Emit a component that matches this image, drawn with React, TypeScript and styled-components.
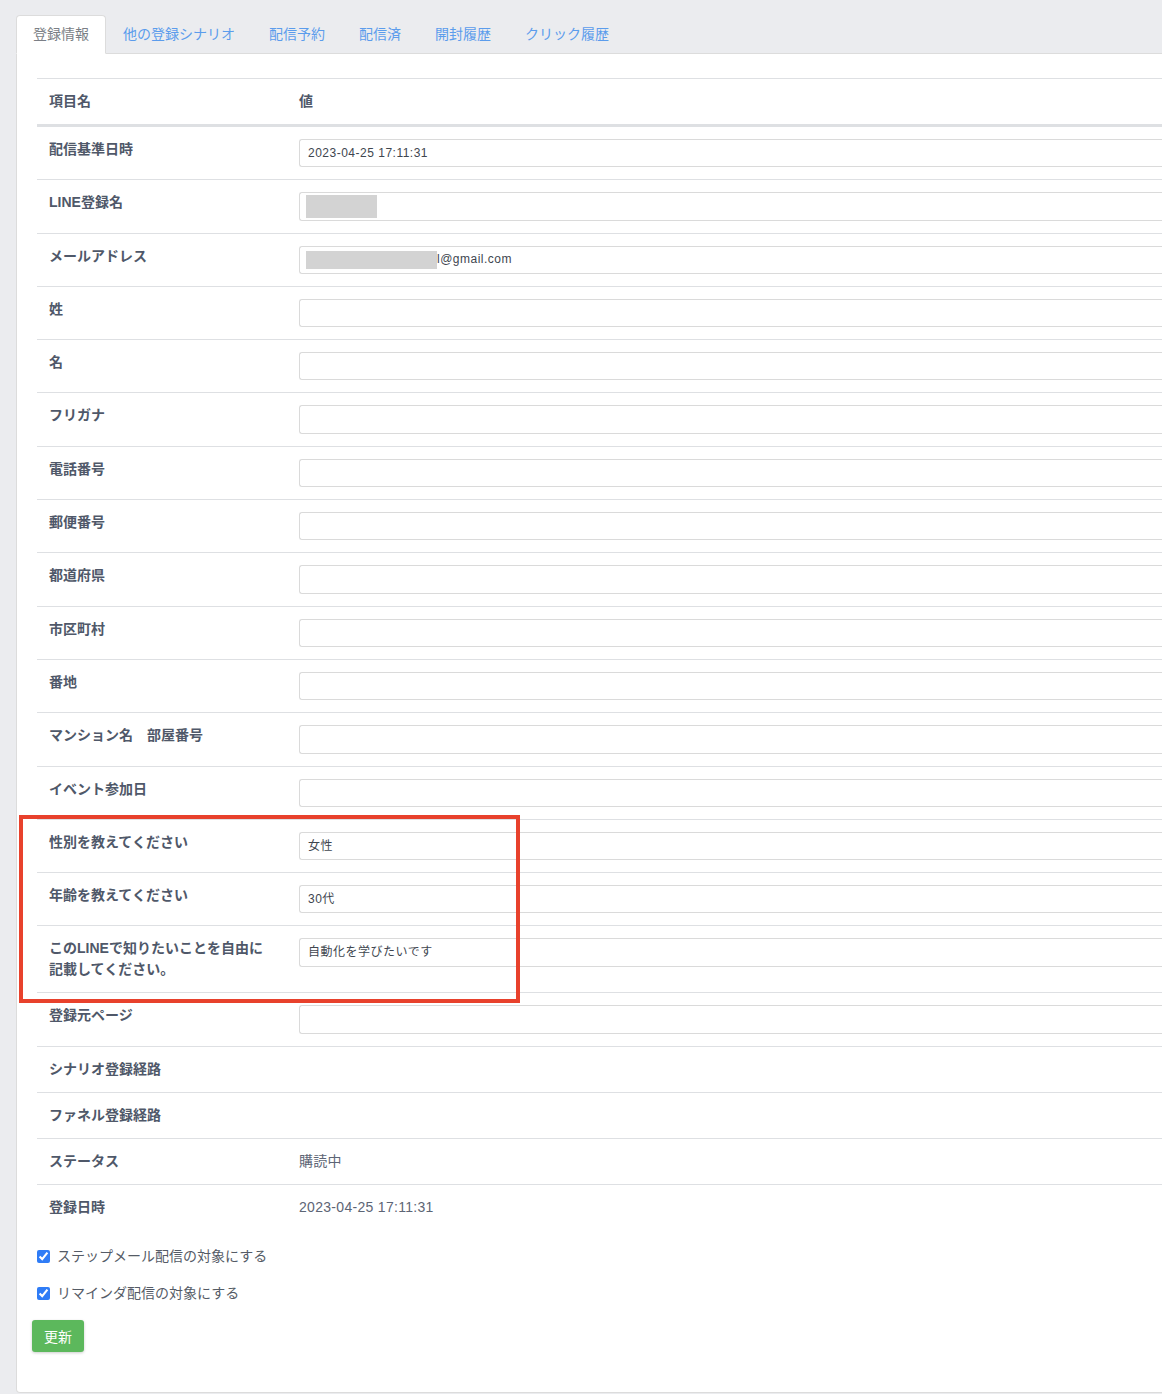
import React from "react";
import styled, { createGlobalStyle } from "styled-components";

const GlobalStyle = createGlobalStyle`
  html, body {
    margin: 0;
    padding: 0;
    overflow: hidden;
    background: #ebecef;
  }
  body {
    font-family: "Liberation Sans", "Noto Sans CJK JP", sans-serif;
    font-size: 14px;
    line-height: 21px;
    color: #4f5869;
  }
  *, *::before, *::after { box-sizing: border-box; }
`;

const Page = styled.div`
  width: 1260px;
  padding: 15px 0 0 16px;
`;

const TabList = styled.nav`
  display: flex;
  border-bottom: 1px solid #dcdcdc;
`;

const Tab = styled.a<{ $active?: boolean }>`
  display: block;
  padding: 8px 16px;
  font-size: 14px;
  line-height: 21px;
  border: 1px solid transparent;
  border-radius: 4px 4px 0 0;
  margin-bottom: -1px;
  text-decoration: none;
  cursor: pointer;
  color: ${(p) => (p.$active ? "#7b7f86" : "#5b9cec")};
  background: ${(p) => (p.$active ? "#ffffff" : "transparent")};
  border-color: ${(p) => (p.$active ? "#dcdcdc #dcdcdc #ffffff" : "transparent")};
`;

const Panel = styled.section`
  background: #ffffff;
  border: 1px solid #dcdcdc;
  border-top: none;
  border-radius: 0 0 4px 4px;
  padding: 24px 20px 40px;
`;

const Table = styled.div`
  display: flex;
  flex-direction: column;
  margin-bottom: 16px;
`;

const HeadRow = styled.div`
  display: grid;
  grid-template-columns: 250px 1fr;
  border-top: 1px solid #dee0e3;
  border-bottom: 2px solid #dee0e3;
`;

const Row = styled.div`
  display: grid;
  grid-template-columns: 250px 1fr;
  border-top: 1px solid #dee0e3;
`;

const LabelCell = styled.div`
  padding: 12px;
  font-weight: 700;
  color: #4f5869;
  font-size: 14px;
  line-height: 21px;
`;

const ValueCell = styled.div`
  padding: 12px;
  color: #5d6575;
  font-size: 14px;
  line-height: 21px;
  letter-spacing: 0.3px;
  min-width: 0;
`;

const Field = styled.div`
  position: relative;
  display: flex;
  align-items: center;
  height: 28.3px;
  padding: 0 8px;
  border: 1px solid #dadada;
  border-right: none;
  border-radius: 3px 0 0 3px;
  background: #fff;
  font-size: 12px;
  letter-spacing: 0.5px;
  color: #40464f;
  white-space: nowrap;
`;

const Redact = styled.span<{ $w: number; $h: number }>`
  display: inline-block;
  width: ${(p) => p.$w}px;
  height: ${(p) => p.$h}px;
  background: #d3d3d3;
  margin-left: -2px;
`;

const Highlight = styled.div`
  position: relative;
  display: flex;
  flex-direction: column;
  &::after {
    content: "";
    position: absolute;
    left: -18px;
    top: -4px;
    width: 501px;
    bottom: -11px;
    border: 4px solid #e8412c;
    pointer-events: none;
  }
`;

const CheckLine = styled.label`
  display: flex;
  align-items: center;
  gap: 7px;
  font-size: 14px;
  line-height: 21px;
  color: #555b66;
  margin-bottom: 16px;
`;

const Check = styled.input`
  width: 13px;
  height: 13px;
  margin: 0;
  accent-color: #2f7cf6;
`;

const UpdateButton = styled.button`
  margin-left: -5px;
  height: 32px;
  padding: 0 12px;
  background: #5cb85c;
  color: #ffffff;
  border: none;
  border-radius: 3px;
  font-family: inherit;
  font-size: 14px;
  box-shadow: 0 1px 3px rgba(0, 0, 0, 0.2);
  cursor: pointer;
`;

type FieldRow = { label: React.ReactNode; value?: React.ReactNode };

const topRows: FieldRow[] = [
  { label: "配信基準日時", value: "2023-04-25 17:11:31" },
  { label: "LINE登録名", value: <Redact $w={71} $h={23} /> },
  {
    label: "メールアドレス",
    value: (
      <>
        <Redact $w={131} $h={18} />l@gmail.com
      </>
    ),
  },
  { label: "姓", value: "" },
  { label: "名", value: "" },
  { label: "フリガナ", value: "" },
  { label: "電話番号", value: "" },
  { label: "郵便番号", value: "" },
  { label: "都道府県", value: "" },
  { label: "市区町村", value: "" },
  { label: "番地", value: "" },
  { label: "マンション名　部屋番号", value: "" },
  { label: "イベント参加日", value: "" },
];

const highlightRows: FieldRow[] = [
  { label: "性別を教えてください", value: "女性" },
  { label: "年齢を教えてください", value: "30代" },
  { label: "このLINEで知りたいことを自由に記載してください。", value: "自動化を学びたいです" },
];

const renderFieldRow = (r: FieldRow, i: number) => (
  <Row key={i}>
    <LabelCell>{r.label}</LabelCell>
    <ValueCell>
      <Field>{r.value}</Field>
    </ValueCell>
  </Row>
);

const tabs = ["登録情報", "他の登録シナリオ", "配信予約", "配信済", "開封履歴", "クリック履歴"];

export default function App() {
  return (
    <>
      <GlobalStyle />
      <Page>
        <TabList>
          {tabs.map((t, i) => (
            <Tab key={t} $active={i === 0}>
              {t}
            </Tab>
          ))}
        </TabList>
        <Panel>
          <Table>
            <HeadRow>
              <LabelCell>項目名</LabelCell>
              <LabelCell>値</LabelCell>
            </HeadRow>
            {topRows.map(renderFieldRow)}
            <Highlight>{highlightRows.map(renderFieldRow)}</Highlight>
            {renderFieldRow({ label: "登録元ページ", value: "" }, 99)}
            <Row>
              <LabelCell>シナリオ登録経路</LabelCell>
              <ValueCell />
            </Row>
            <Row>
              <LabelCell>ファネル登録経路</LabelCell>
              <ValueCell />
            </Row>
            <Row>
              <LabelCell>ステータス</LabelCell>
              <ValueCell>購読中</ValueCell>
            </Row>
            <Row>
              <LabelCell>登録日時</LabelCell>
              <ValueCell>2023-04-25 17:11:31</ValueCell>
            </Row>
          </Table>
          <CheckLine>
            <Check type="checkbox" defaultChecked />
            ステップメール配信の対象にする
          </CheckLine>
          <CheckLine>
            <Check type="checkbox" defaultChecked />
            リマインダ配信の対象にする
          </CheckLine>
          <UpdateButton>更新</UpdateButton>
        </Panel>
      </Page>
    </>
  );
}
